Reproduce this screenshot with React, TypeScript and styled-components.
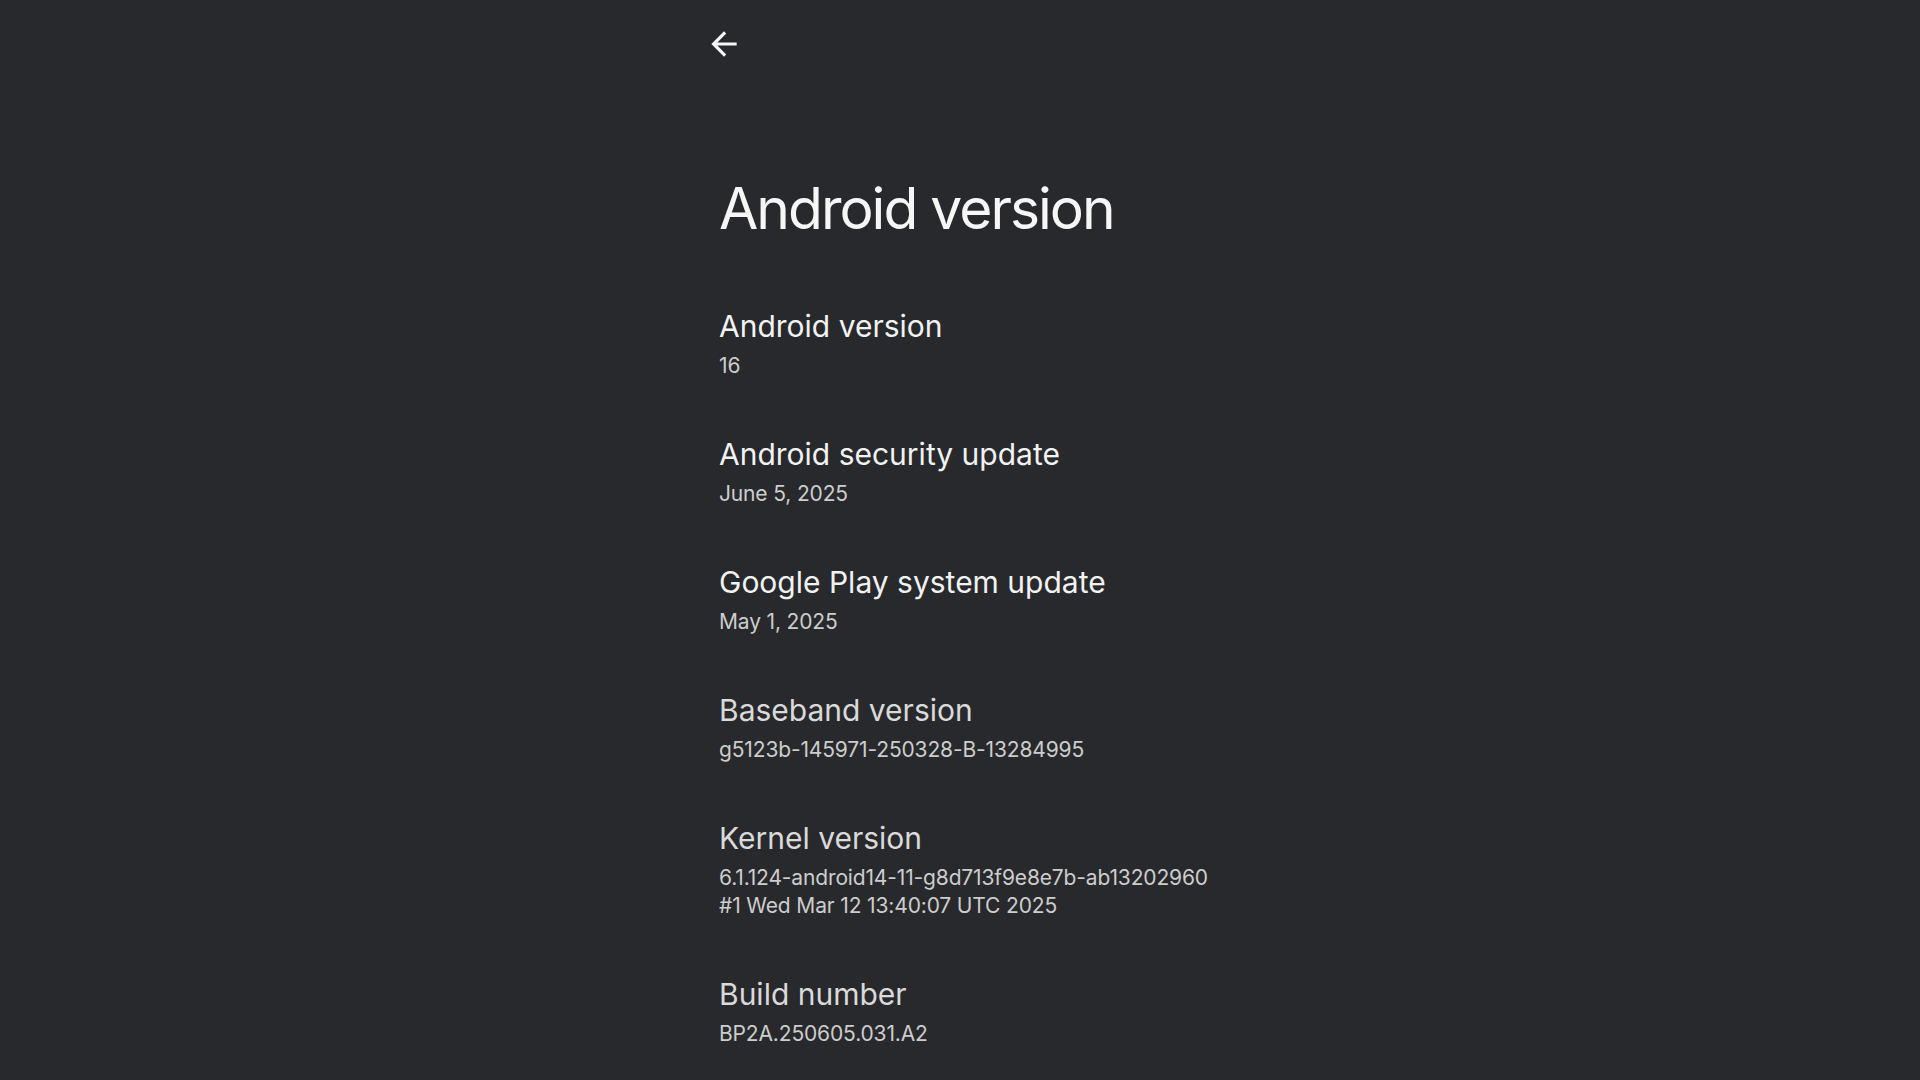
import styled, { createGlobalStyle } from 'styled-components';

const GlobalStyle = createGlobalStyle`
  html, body {
    margin: 0;
    padding: 0;
    background: #28292c;
  }
  body {
    font-family: Inter, "Noto Sans", sans-serif;
    -webkit-font-smoothing: antialiased;
  }
`;

const items = [
  { title: 'Android version', lines: ['16'] },
  { title: 'Android security update', lines: ['June 5, 2025'] },
  { title: 'Google Play system update', lines: ['May 1, 2025'] },
  { title: 'Baseband version', lines: ['g5123b-145971-250328-B-13284995'], dim: true },
  {
    title: 'Kernel version',
    lines: ['6.1.124-android14-11-g8d713f9e8e7b-ab13202960', '#1 Wed Mar 12 13:40:07 UTC 2025'],
    dim: true,
  },
  { title: 'Build number', lines: ['BP2A.250605.031.A2'], dim: true },
];

function BackArrow() {
  return (
    <svg width="38" height="38" viewBox="0 0 24 24" fill="#f4f4f4">
      <path d="M20 11H7.83l5.59-5.59L12 4l-8 8 8 8 1.41-1.41L7.83 13H20v-2z" />
    </svg>
  );
}

export default function App() {
  return (
    <Page>
      <GlobalStyle />
      <Column>
        <TopBar>
          <BackButton aria-label="Back">
            <BackArrow />
          </BackButton>
        </TopBar>
        <Heading>Android version</Heading>
        <List>
          {items.map(item => (
            <Item key={item.title}>
              <ItemTitle $dim={item.dim}>{item.title}</ItemTitle>
              <ItemValue>
                {item.lines.map(line => (
                  <div key={line}>{line}</div>
                ))}
              </ItemValue>
            </Item>
          ))}
        </List>
      </Column>
    </Page>
  );
}

const Page = styled.div`
  min-height: 1080px;
  background: #28292c;
  display: flex;
  justify-content: center;
  overflow: hidden;
`;

const Column = styled.div`
  width: 481px;
  padding-right: 1px;
  display: flex;
  flex-direction: column;
  white-space: nowrap;
`;

const TopBar = styled.div`
  height: 88px;
  display: flex;
  align-items: center;
`;

const BackButton = styled.button`
  margin-left: -14px;
  padding: 0;
  border: none;
  background: none;
  display: flex;
  cursor: pointer;
`;

const Heading = styled.h1`
  margin: 86px 0 0;
  font-size: 57px;
  line-height: 70px;
  font-weight: 400;
  letter-spacing: -2px;
  color: #f6f6f6;
`;

const List = styled.div`
  margin-top: 64px;
  display: flex;
  flex-direction: column;
  gap: 56px;
`;

const Item = styled.div`
  display: flex;
  flex-direction: column;
  gap: 8px;
`;

const ItemTitle = styled.div<{ $dim?: boolean }>`
  font-size: 30px;
  line-height: 36px;
  color: ${p => (p.$dim ? '#dadada' : '#f2f2f2')};
`;

const ItemValue = styled.div`
  font-size: 21px;
  line-height: 28px;
  letter-spacing: -0.15px;
  color: #cdcdcd;
`;
